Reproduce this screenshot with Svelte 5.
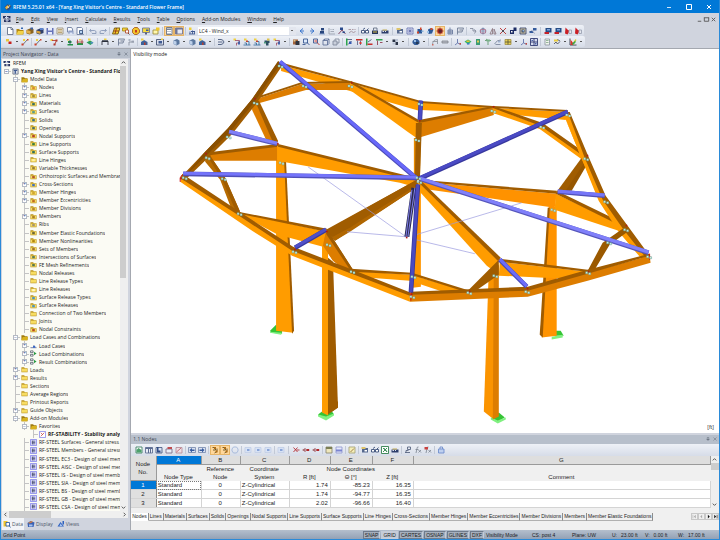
<script lang="ts">
	type Layer = [string, string, string?];

	let activeTab = $state('Nodes');
	let activeView = $state('Data');

	const menus = ['File', 'Edit', 'View', 'Insert', 'Calculate', 'Results', 'Tools', 'Table', 'Options', 'Add-on Modules', 'Window', 'Help'];

	// layers of an icon on a 16 x 16 grid: fill, path, stroke
	const icons: Record<string, Layer[]> = {
		logo: [['#2b3560', 'M0 2h6v5H0zM8 2h7v5H8zM2 9h5v5H2zM9 9h6v5H9z'], ['#c9d4ef', 'M4 4h7v2H4zM5 11h7v1H5z']],
		app: [['#2b4f86', 'M1 8l6-6 8 4-5 9-6-1z'], ['#e6b13a', 'M2 9l5-5 2 5-4 4zM9 3l4 2-2 3z'], ['#fff', 'M6 8l3-2 1 4z']],
		new: [['#fff', 'M3 1h8l3 3v11H3z', '#5e6b84'], ['none', 'M10 1v4h4', '#5e6b84']],
		open: [['#b58a10', 'M1 4h5l2 2h7v9H1z'], ['#f2d24c', 'M4 8h12l-3 7H1z'], ['#3567b0', 'M10 1h4v3h-4z']],
		box: [['#8a6420', 'M1 6l9-4 5 2v8l-8 3-6-2z'], ['#e4b04a', 'M1 6l8 2v6l-8-2z'], ['#3c5fa4', 'M9 1h5v4H9z']],
		boxBlue: [['#30406c', 'M1 6l9-4 5 2v8l-8 3-6-2z'], ['#d7a23c', 'M1 7l8 2v5l-8-2z'], ['#5c83cc', 'M8 2h7v4H8z']],
		save: [['#6673b8', 'M1 2h14v13H1z'], ['#e8ecfa', 'M4 2h8v5H4zM4 10h8v5H4z']],
		list: [['#f3efe2', 'M2 2h12v12H2z', '#9a8f78'], ['none', 'M4 5h8M4 8h8M4 11h8', '#b39a63']],
		print: [['#fff', 'M3 1h8l2 3v6H3z', '#68779a'], ['#8f9fc5', 'M5 7h10v7H5z'], ['#dfe7f7', 'M7 11h6v4H7z']],
		preview: [['#fff', 'M2 1h9l2 2v12H2z', '#68779a'], ['#b9d4f2', 'M7 7h6v6H7z', '#38547f'], ['none', 'M12 12l3 3', '#38547f']],
		undo: [['none', 'M4 4L1 7l4 3M2 7h9q4 0 3 6H6', '#8495b5']],
		redo: [['none', 'M12 4l3 3-4 3M14 7H5q-4 0-3 6h8', '#8495b5']],
		sheet: [['#f5cf2b', 'M5 2h11l-4 12H1z', '#6c5308'], ['none', 'M3 8h11M9 2L6 14', '#8e2f18']],
		find: [['#f3d43a', 'M1 2h10v6H1z', '#a58a1b'], ['#fff', 'M7 6h6v6H7z', '#b04a2c'], ['none', 'M12 12l3 3', '#70351f']],
		gear: [['#f2c52c', 'M5 1h6l4 5v5l-5 4H5l-4-4V5z', '#a6591a'], ['#c33b27', 'M6 6h4v5H6z']],
		monitor: [['#f4da3e', 'M1 2h14v9H1z', '#6d7390'], ['#56617e', 'M6 11h4v4H6z'], ['#3d56a0', 'M8 5h5v3H8z']],
		note: [['#fff7ac', 'M2 6h10v8H2z', '#9b8c3b'], ['#f0c728', 'M8 1h7v6H8z']],
		calc: [['#fff', 'M3 1h11v14H3z', '#5e6b84'], ['#7b8494', 'M4 3h9v3H4zM5 8h2v2H5zM9 8h2v2H9zM5 12h2v2H5zM9 12h2v2H9z']],
		panel: [['#e8eaf2', 'M1 2h14v12H1z', '#6f6f8f'], ['#6f7596', 'M1 2h14v3H1zM1 5h4v9H1z']],
		load: [['#f0cf34', 'M2 1h5v5H2z'], ['none', 'M2 14h12M4 9v5M9 7v7M13 10v4', '#3b5590'], ['#3b5590', 'M6 8h8v2H6z']],
		prev: [['none', 'M10 3L4 8l6 5M5 8h7', '#2367c9']],
		next: [['none', 'M6 3l6 5-6 5M11 8H4', '#2367c9']],
		person: [['#27457d', 'M6 2h6v5H6zM4 8h8v6H4z'], ['#8fa5cb', 'M2 13h12v2H2z']],
		dims: [['none', 'M2 2v12h12M5 5h2M9 5h3M5 9h7', '#9aa0ad']],
		arch: [['#2c4c8d', 'M4 1h6v5H4z'], ['none', 'M1 14l7-8 7 8', '#77314e'], ['#2c4c8d', 'M9 9h5v3H9z']],
		values: [['none', 'M1 5h5M8 5h3M13 5h2M2 12l5-4 4 4 4-4', '#a08c95']],
		glasses: [['#fff', 'M1 7h6v5H1zM9 7h6v5H9z', '#2f4570'], ['none', 'M4 5l4-3M12 6l3-3', '#2f4570']],
		lock: [['#24345c', 'M2 7h12v7H2z'], ['none', 'M5 7V2h7v5', '#5f6a80'], ['#d6bd44', 'M4 9h8v2H4z']],
		cars: [['#2e3f6c', 'M1 7h14v6H1z'], ['#dce1ee', 'M3 8h3v2H3zM8 8h2v2H8z'], ['#c3ad52', 'M3 5h9v2H3z']],
		render: [['#55688e', 'M2 4h12v9H2z'], ['#ddc36a', 'M1 2h8v4H1z'], ['#fff', 'M7 8h5v3H7z']],
		target: [['#e7e9fa', 'M2 2h12v12H2z', '#6771ad'], ['none', 'M8 3v10M3 8h10M5 5l6 6M11 5l-6 6', '#6771ad']],
		node: [['#2b5898', 'M3 4h9v9H3z'], ['#d34526', 'M8 1h3v5H8zM2 9h4v4H2z'], ['#8bb5dd', 'M11 7h4v3h-4z']],
		solid: [['#2b5898', 'M4 5l6-3 5 3-3 8-7 1z'], ['#d84c24', 'M9 2h4v4H9z'], ['#9dc4ea', 'M2 8h4v4H2z']],
		hot: [['#b32a1c', 'M3 3h10v10H3z'], ['#252d56', 'M6 6h5v5H6z'], ['none', 'M1 8h14M8 1v14', '#7e1f18']],
		mesh: [['#c7cedd', 'M4 6h9v8H4z', '#68799d'], ['none', 'M8 1v5M4 10h9M8 6v8', '#68799d']],
		plan: [['#dde0e9', 'M3 2h12l-3 8H3z', '#6c7891'], ['none', 'M3 10v5M7 6h5', '#6c7891']],
		bolt: [['none', 'M2 3h6v5h6M10 5l4 3-3 5', '#818899']],
		move: [['none', 'M8 1v14M1 8h14M5 3h6M5 13h6', '#7787ab'], ['none', 'M3 5h10v7H3z', '#a9718e']],
		mirror: [['none', 'M2 14L7 3v11zM14 14L10 4v10z', '#8b7780']],
		cross: [['none', 'M2 2l12 12M14 2L2 14', '#b8201c'], ['#504b52', 'M6 6h4v4H6z']],
		copy: [['#1d2c65', 'M2 6h8v8H2zM9 1h6v7H9z'], ['#fff', 'M4 8h3v3H4z']],
		camera: [['#cfc6a7', 'M2 2h12v12H2z', '#39466b'], ['#34425f', 'M5 5h6v6H5z'], ['#90b3dc', 'M7 6h3v3H7z']],
		plug: [['#355b9c', 'M8 2h7v5H8zM1 8h7v4H1z'], ['none', 'M5 6l6 7', '#7c8db0']],
		redBox: [['#274d86', 'M3 2h12v9H3z'], ['#c5202a', 'M1 10h9v4H1z'], ['#7ea3d8', 'M6 4h6v3H6z']],
		redFlag: [['#cb1f26', 'M3 1l5 5 4 1-5 8-5-2z'], ['#e5e7ee', 'M10 6h5v7h-5z', '#99a0b1']],
		dot: [['#c7211d', 'M7 7h6v5H7z'], ['#eac83c', 'M2 2h6v5H2z']],
		line: [['none', 'M3 14L13 3', '#5b5e68'], ['#d04028', 'M1 11h4v4H1zM12 2h3v3h-3z'], ['#eed041', 'M4 2h4v4H4z']],
		poly: [['#eed041', 'M1 2h5v4H1z'], ['none', 'M4 5h9L9 14', '#b2372c'], ['#b2372c', 'M11 3h4v4h-4zM7 11h4v4H7z']],
		support: [['#eed041', 'M2 1h5v4H2z'], ['#269547', 'M4 6h7v4H4zM3 12h11v3H3z'], ['none', 'M8 4v9', '#344768']],
		beam: [['#2a9447', 'M2 10h12v4H2z'], ['none', 'M3 3v9M12 3v9M1 8h14', '#a93c35'], ['#eed041', 'M6 2h4v3H6z']],
		slab: [['#2b9d5a', 'M1 9l7-4 7 4-6 5z'], ['#eed041', 'M4 1h5v4H4z'], ['#4f90c4', 'M9 8h5v3H9z']],
		frame: [['none', 'M2 14V6h12v8', '#2a2e3a'], ['#2a2e3a', 'M2 5h12v3H2z'], ['#eed041', 'M6 1h5v3H6z']],
		tree: [['#aab2c2', 'M3 2h4v4H3zM9 5h5v4H9z'], ['none', 'M4 15V8h10', '#858c9a']],
		house: [['#3d6299', 'M2 8l6-4 7 4v6H2z'], ['#eed041', 'M2 1h5v4H2z'], ['#b23e31', 'M8 9h3v5H8z']],
		window: [['#d9deec', 'M1 3h14v11H1z', '#3f4d6e'], ['#3f5a91', 'M5 6h7v5H5z'], ['#eed041', 'M10 1h4v3h-4z']],
		cube: [['#5b789f', 'M3 5l7-3 5 3v7l-6 3-6-3z'], ['#bdd0ea', 'M3 5l6 2v7l-6-2z']],
		curve: [['none', 'M2 3h6q4 0 6 5-2 5-6 5H2M2 8h9', '#405276']],
		tool: [['#eed041', 'M1 1h5v4H1z'], ['none', 'M4 5h9v5H7v5', '#9d4f68'], ['#4561a6', 'M10 7h4v6h-4z']],
		stair: [['#eed041', 'M2 1h5v4H2z'], ['none', 'M1 14h14M3 10h4v4M7 7h5v7', '#356c9d'], ['#c24430', 'M6 5h4v3H6z']],
		stamp: [['#2d4f62', 'M3 5h10v5H3zM6 10h5v5H6z'], ['#dcc24d', 'M8 1h5v4H8z'], ['#4d9a7a', 'M2 8h4v3H2z']],
		brick: [['#a2633b', 'M2 3h10v10H2z'], ['#30353f', 'M7 6h8v8H7z'], ['#d8c48a', 'M3 4h4v3H3z']],
		zoom: [['#dbe8fa', 'M3 2h8v8H3z', '#30508c'], ['none', 'M10 9l5 5M1 13h6', '#30508c']],
		zoomRed: [['#f6dede', 'M3 2h8v8H3z', '#30508c'], ['none', 'M10 9l5 5M5 6h5', '#bd2a24']],
		wire: [['none', 'M2 5h9v9H2zM5 2h9v9M2 5l3-3M11 5l3-3M11 14l3-3M5 2v3', '#5b6d96']],
		wireGrey: [['#c9cfdb', 'M2 6h8v8H2z', '#7d8799'], ['none', 'M6 6V2h8v8h-4', '#7d8799']],
		axisX: [['none', 'M3 2v12M3 3h11M6 13l7-7', '#4b5478'], ['#2da34c', 'M2 1h3v14H2z'], ['#3458b0', 'M8 7h5v5H8z']],
		axisY: [['#c72e2a', 'M2 2h13v3H2z'], ['none', 'M5 5v9M11 5v9', '#5b6285'], ['#d6332e', 'M9 8h4v4H9z']],
		axisZ: [['#2da34c', 'M2 1h3v14H2z'], ['#c72e2a', 'M5 11h10v3H5z'], ['none', 'M6 8l7-5', '#43507a']],
		axisV: [['#2da34c', 'M2 2h13v3H2z'], ['none', 'M5 5v9M10 9h5', '#8b3448']],
		shade: [['#2a3346', 'M3 3h6v5H3zM9 8h5v6H9z'], ['#bbc5d7', 'M9 2h5v5H9zM3 9h5v4H3z']],
		globe: [['#315a97', 'M5 2h6l4 4v5l-4 3H5l-4-4V6z'], ['#9abfe6', 'M4 4h4v4H4z'], ['#263a55', 'M8 8h5v4H8z']],
		arcs: [['none', 'M3 14Q3 3 13 3v9M3 7h10', '#8b9199'], ['#cb6d62', 'M2 12h3v3H2z']],
		pill: [['#b6bac4', 'M2 6h12v4H2z', '#83878f']],
		axes: [['none', 'M7 2v8l7 3M7 10l-5 4', '#5c6fa8'], ['#c74a3f', 'M11 10h3v3h-3z']],
		iso: [['#36b76b', 'M1 7l7-4 7 4-7 6z'], ['#e9c13a', 'M5 5h6v3H5z'], ['#3a7ac7', 'M6 10h5v3H6z']],
		solidGreen: [['#3a9b74', 'M4 2h8v12H4z'], ['#e0cd54', 'M6 5h4v4H6z']],
		palm: [['none', 'M2 5h12M8 5v9M4 2l4 3', '#5b9567'], ['#7ab08a', 'M5 3h7v4H5z']],
		wind: [['none', 'M1 12q5-9 13-8M3 13h10', '#77839b'], ['#9fb2d0', 'M8 6h5v3H8z']],
		grid: [['#e6cf55', 'M2 3h12v10H2z', '#a3924a'], ['none', 'M2 8h12M8 3v10', '#5c5838']],
		quad: [['#d5dcf0', 'M1 1h14v14H1z', '#28336c'], ['none', 'M8 1v14M1 8h14', '#28336c'], ['#4d64a8', 'M3 4h3v2H3zM10 10h3v3h-3z']],
		doc: [['#f1f3ee', 'M4 2h9v12H4z', '#8e97a0'], ['#95b899', 'M6 4h5v2H6zM6 8h5v2H6z']],
		spring: [['#e9cc3f', 'M2 3h8v4H2z'], ['none', 'M2 12l4-4 3 4 5-5M9 3l5 3', '#494d58']],
		chart: [['#fff', 'M2 1v13h13', '#262c3c'], ['#d6332e', 'M3 3l5 6v5H3z'], ['#e8cf32', 'M8 9l5-7 2 2-6 10z'], ['#38a14d', 'M6 11l7-6v4l-5 5z']],
		tblGreen: [['#fff', 'M2 2h12v12H2z', '#387b5d'], ['#4ba06c', 'M3 8l4-4 6 4v5H3z']],
		tbl: [['#e9edf6', 'M1 3h14v11H1z', '#5b6b90'], ['#5b6b90', 'M1 3h14v3H1zM6 6h2v8H6zM10 6h2v8h-2z']],
		tblIn: [['#dce3f2', 'M2 3h12v11H2z', '#46587f'], ['#2f4a85', 'M4 2h3v7h4v4H4z']],
		tblRed: [['#e9edf6', 'M2 6h12v8H2z', '#7a6c88'], ['#bf4b4e', 'M5 2h9v4H5z']],
		tblPink: [['#eedfe4', 'M2 3h12v11H2z', '#b68d98'], ['none', 'M3 12l9-8', '#ba5b67']],
		tblBack: [['#dce3f2', 'M1 3h14v10H1z', '#7b8cb0'], ['#355a9e', 'M3 8l5-4v3h5v3H8v3z']],
		tblNext: [['#dce3f2', 'M1 3h14v10H1z', '#7b8cb0'], ['#355a9e', 'M13 8L8 4v3H3v3h5v3z']],
		sync: [['none', 'M3 3h6v5H4M12 5v6l-5 3', '#5a4a1e'], ['#b06d14', 'M6 2h4v4H6zM9 9h4v4H9z']],
		ring: [['none', 'M5 2h6l3 4v4l-3 4H5l-3-4V6z', '#9fb4d8']],
		faded: [['#d7e2f5', 'M2 3h12v10H2z', '#c3cfe6'], ['#8aa5d8', 'M6 6h5v4H6z']],
		del: [['none', 'M3 3l8 9M11 3l-8 9M9 8h6', '#b3262a']],
		ins: [['none', 'M1 8h14M7 4l-4 4 4 4', '#913c42'], ['#b3262a', 'M9 6h5v4H9z']],
		yellow: [['#efe7bb', 'M2 2h12v12H2z', '#8a8870'], ['#7c7f55', 'M2 2h12v4H2z']],
		blueTbl: [['#e6e9fb', 'M2 2h12v12H2z', '#9299cf'], ['#7983cf', 'M2 7h12v4H2z']],
		pen: [['#f5efb8', 'M2 2h12v12H2z', '#a7a279'], ['none', 'M5 12l7-7', '#8f6c3a']],
		excel: [['#fff', 'M1 1h14v14H1z', '#267a43'], ['none', 'M4 4l8 8M12 4l-8 8', '#267a43'], ['none', 'M6 4l6 7', '#3c9c5b']],
		fx: [['none', 'M9 2q-3-1-3 3L4 14M3 7h6M9 8l5 5M14 8l-5 5', '#7e8694']],
		fxRed: [['none', 'M9 2q-3-1-3 3L4 14M9 8l5 5M14 8l-5 5', '#7e8694'], ['#c8403f', 'M1 2h7v5H1z']],
		nodeLink: [['none', 'M7 2h6v5H7zM2 13h10M4 13V9h5', '#525e7c']],
		disk: [['#bfd0ef', 'M3 6h11v8H3z', '#6a8acb'], ['none', 'M6 6V2h5v4', '#6a8acb']],
		folder: [['#b8901c', 'M1 3h6l2 2h6v9H1z'], ['#f7dc62', 'M2 6h12v7H2z']],
		folderOpen: [['#a07c10', 'M1 3h6l2 2h6v9H1z'], ['#d9b31e', 'M4 7h12l-2 7H1z']],
		model: [['#d9dee8', 'M2 2h12v12H2z', '#5c6579'], ['#3f5a91', 'M4 4h8v3H4zM6 7h3v6H6z']],
		moduleIcon: [['#dcdcff', 'M1 1h14v14H1z', '#7a7ae8'], ['none', 'M4 5h8M4 8h8M4 11h8M6 4v8', '#4a4f70']],
		module: [['#fff', 'M1 1h14v14H1z', '#7a7ae8'], ['none', 'M4 12l8-8M4 4l5 5', '#c44242']],
		loadCase: [['none', 'M1 13h14M9 7v6', '#4d5c96'], ['#3768c8', 'M7 9h5v4H7z']],
		combo: [['#fff', 'M1 2h6v4H1zM1 10h6v4H1z', '#4b5263'], ['#2a9a42', 'M9 4l6 4-6 4z']],
		data: [['#f1c62f', 'M1 2h8v11H1z'], ['#fff', 'M6 5h7v7H6z', '#28589f'], ['none', 'M12 11l3 4', '#28589f']],
		display: [['#3a62b4', 'M1 6l6-4 8 3-2 9H2z'], ['#d87c3b', 'M2 6l7-4 3 2-7 3z'], ['#a9c3ef', 'M4 9h7v4H4z']],
		views: [['#2f62c0', 'M1 13l6-9 7 9z'], ['#a8c4f2', 'M7 7l4 5H5z'], ['#2f62c0', 'M11 2h3v7h-3z']]
	};

	// | thin separator, : group gap, v drop arrow, ! pressed button
	const fileTools = 'new open box boxBlue save list print preview | undo redo | sheet find gear monitor note | !calc !panel | load'.split(' ');
	const viewTools = 'prev next person dims arch values | glasses lock cars : render target node solid !hot mesh plan | bolt move mirror cross copy camera plug : redBox redBox redFlag redFlag'.split(' ');
	const modelTools =
		'dot v line | line v poly v support beam slab : frame v plan tree | house v window v cube v cube house v | curve v tool stair stair stamp tool v | brick zoom zoomRed wire wireGrey | axisX axisY axisZ axisV v shade v : globe v | arcs pill | axes iso solidGreen palm wind grid v axes quad | doc spring v chart v'.split(' ');
	const tableTools =
		'tblGreen tbl tblIn tblRed tblPink | tblBack tblNext | !sync !sync ring | faded faded faded | faded : del ins ins | yellow blueTbl | pen | render glasses excel cars | nodeLink fx fxRed | disk'.split(' ');

	// depth, sign, icon, label, mark colour
	const tree: [number, string, string, string, string?][] = [
		[0, '', 'logo', 'RFEM'],
		[1, '-', 'model', "Yang Xing Visitor's Centre - Standard Flower Frame"],
		[2, '-', 'folderOpen', 'Model Data'],
		[3, '+', 'folder', 'Nodes', '#d8892a'],
		[3, '+', 'folder', 'Lines', '#a38a3d'],
		[3, '+', 'folder', 'Materials', '#3d6f5c'],
		[3, '+', 'folder', 'Surfaces', '#5b9a8b'],
		[3, '', 'folder', 'Solids', '#3b6d86'],
		[3, '', 'folder', 'Openings', '#4d6c63'],
		[3, '+', 'folder', 'Nodal Supports', '#b3402a'],
		[3, '', 'folder', 'Line Supports', '#3f7d3b'],
		[3, '', 'folder', 'Surface Supports', '#2f6e5a'],
		[3, '', 'folder', 'Line Hinges', '#fff2a8'],
		[3, '', 'folder', 'Variable Thicknesses', '#967b35'],
		[3, '', 'folder', 'Orthotropic Surfaces and Membranes', '#b0562e'],
		[3, '+', 'folder', 'Cross-Sections', '#3f6fc0'],
		[3, '+', 'folder', 'Member Hinges', '#cfa530'],
		[3, '+', 'folder', 'Member Eccentricities', '#c06b22'],
		[3, '', 'folder', 'Member Divisions', '#b5832b'],
		[3, '+', 'folder', 'Members', '#a97e26'],
		[3, '', 'folder', 'Ribs', '#a5946a'],
		[3, '', 'folder', 'Member Elastic Foundations', '#6d6535'],
		[3, '', 'folder', 'Member Nonlinearities', '#b28411'],
		[3, '', 'folder', 'Sets of Members', '#a0702d'],
		[3, '', 'folder', 'Intersections of Surfaces', '#597b5a'],
		[3, '', 'folder', 'FE Mesh Refinements', '#55754c'],
		[3, '', 'folder', 'Nodal Releases'],
		[3, '', 'folder', 'Line Release Types'],
		[3, '', 'folder', 'Line Releases', '#fff8c6'],
		[3, '', 'folder', 'Surface Release Types', '#4c93bd'],
		[3, '', 'folder', 'Surface Releases', '#4c93bd'],
		[3, '', 'folder', 'Connection of Two Members'],
		[3, '', 'folder', 'Joints'],
		[3, '', 'folder', 'Nodal Constraints', '#b84a20'],
		[2, '-', 'folderOpen', 'Load Cases and Combinations'],
		[3, '+', 'loadCase', 'Load Cases'],
		[3, '+', 'combo', 'Load Combinations'],
		[3, '+', 'combo', 'Result Combinations'],
		[2, '+', 'folder', 'Loads'],
		[2, '+', 'folder', 'Results'],
		[2, '', 'folder', 'Sections'],
		[2, '', 'folder', 'Average Regions'],
		[2, '', 'folder', 'Printout Reports'],
		[2, '+', 'folder', 'Guide Objects'],
		[2, '-', 'folderOpen', 'Add-on Modules'],
		[3, '-', 'folderOpen', 'Favorites'],
		[4, '', 'module', 'RF-STABILITY - Stability analysis'],
		[3, '', 'moduleIcon', 'RF-STEEL Surfaces - General stress analysis'],
		[3, '', 'moduleIcon', 'RF-STEEL Members - General stress analysis'],
		[3, '', 'moduleIcon', 'RF-STEEL EC3 - Design of steel members'],
		[3, '', 'moduleIcon', 'RF-STEEL AISC - Design of steel members'],
		[3, '', 'moduleIcon', 'RF-STEEL IS - Design of steel members'],
		[3, '', 'moduleIcon', 'RF-STEEL SIA - Design of steel members'],
		[3, '', 'moduleIcon', 'RF-STEEL BS - Design of steel members'],
		[3, '', 'moduleIcon', 'RF-STEEL GB - Design of steel members'],
		[3, '', 'moduleIcon', 'RF-STEEL CSA - Design of steel members']
	];

	const rows = [
		[1, '1.74', '-85.23', '16.35'],
		[2, '1.74', '-94.77', '16.35'],
		[3, '2.02', '-96.66', '16.40']
	];

	const tabs = [
		'Nodes', 'Lines', 'Materials', 'Surfaces', 'Solids', 'Openings', 'Nodal Supports', 'Line Supports', 'Surface Supports', 'Line Hinges',
		'Cross-Sections', 'Member Hinges', 'Member Eccentricities', 'Member Divisions', 'Members', 'Member Elastic Foundations'
	];

	const snaps = ['SNAP', 'GRID', 'CARTES', 'OSNAP', 'GLINES', 'DXF'];

	const O = '#ff9c00';
	const M = '#dd7d00';
	const B = '#a05c00';
	const G = '#35c435';
	const L = '#80f080';

	// timber faces, back to front
	const faces: [string, string][] = [
		[G, '270,331 276,325 282,331 282,334 271,333'],
		[L, '270,332 282,333 281,335 270,333'],
		[O, '276,160 285,160 293,333 276,331'],
		[B, '284,160 286,162 294,331 292,334'],
		['#ff9600', '417,186 421,186 421,287 413,288'],
		[G, '552,336 556,331 561,331 564,336'],
		[L, '552,337 563,335 563,338 552,340'],
		['#ff9300', '549,207 557,207 557,336 542,338'],
		[B, '548,208 550,208 543,338 540,335'],
		[O, '281,65 350,83 420,102 420,111 350,91 281,71'],
		[B, '279,62 350,81 421,101 421,103 350,83 281,65'],
		[O, '421,102 493,108 568,112 566,120 493,113 421,110'],
		[B, '420,101 493,106 568,110 568,112 493,108 421,103'],
		[M, '253,100 302,84 350,83 350,90 306,90 256,104'],
		[B, '253,98 302,82 350,81 350,83 302,84 253,100'],
		[O, '350,83 419,122 418,139 408,132 350,90'],
		[B, '351,81 419,120 419,123 350,83'],
		[M, '419,122 493,107 494,115 418,138'],
		[B, '419,120 493,106 493,108 419,123'],
		[O, '493,108 543,126 586,157 584,161 540,129 493,113'],
		[B, '493,106 543,123 588,155 586,158 541,126 493,108'],
		[M, '252,103 257,101 278,142 268,144 252,110'],
		[B, '255,101 259,101 278,141 274,145'],
		[M, '205,155 278,146 278,161 207,161'],
		[B, '205,153 278,144 278,147 205,156'],
		[O, '277,146 412,178 418,183 414,187 400,183 277,161'],
		[B, '278,144 416,178 416,181 278,147'],
		['#e98c00', '414,138 421,138 420,180 414,180'],
		[B, '416,123 422,123 420,180 415,180'],
		['#ff9200', '420,182 557,194 555,208 480,197 430,190'],
		[B, '419,180 557,191 557,194 420,182'],
		[O, '556,194 626,227 622,232 555,210'],
		[B, '557,191 627,225 625,228 556,194'],
		[B, '582,158 588,161 570,191 557,192'],
		['#965600', '586,161 589,162 572,191 566,191'],
		[O, '565,117 583,158 602,200 623,230 645,261 641,258 619,232 599,201'],
		[O, '565,117 569,114 587,157 605,199 627,229 650,258 645,261 621,231 601,203 583,161'],
		[B, '568,112 570,112 588,155 606,196 628,226 650,256 647,259 624,230 603,200 585,158'],
		['#9a5900', '623,229 628,232 610,245 595,270 588,271 603,243'],
		['#b76b00', '205,156 210,156 225,178 240,212 232,211 220,180 205,162'],
		[B, '207,156 210,156 225,178 240,212 236,212 222,180'],
		[O, '239,213 327,232 323,247 278,235 242,216'],
		[B, '238,212 327,229 326,232 239,214'],
		[O, '418,182 421,184 500,261 491,269 487,266 419,191'],
		[B, '420,180 501,258 498,261 419,183'],
		[B, '326,231 390,195 417,180 418,187 392,204 350,231 335,241'],
		['#b06600', '332,237 350,228 418,183 418,187 350,232 335,241'],
		[B, '326,230 417,180 418,185 350,227 333,237'],
		[M, '326,231 352,271 345,270 333,261 323,246'],
		[B, '328,231 353,270 350,270 326,234'],
		[O, '351,271 411,275 469,292 443,292 410,281 370,278'],
		[B, '351,269 412,273 470,291 462,291 411,275 351,272'],
		[O, '322,246 328,247 328,416 322,413'],
		[B, '328,258 333,262 338,408 328,415'],
		[M, '326,232 351,270 345,270 333,261 323,246'],
		[B, '328,231 353,270 350,270 326,234'],
		[G, '318,415 322,412 332,412 334,415 326,419'],
		[L, '318,415 326,417 334,414 334,416 326,421 318,417'],
		[O, '322,408 328,408 328,416 322,413'],
		[B, '328,402 338,402 338,408 328,415'],
		['#fb9400', '489,270 495,270 494,420 484,412'],
		[G, '492,419 499,413 505,418 498,422'],
		[L, '491,418 498,421 506,418 506,420 498,424 491,420'],
		[M, '494,270 499,265 499,417 493,420'],
		[O, '500,262 588,272 577,279 545,278 499,276'],
		[B, '499,259 588,270 587,272 499,262'],
		[B, '499,260 499,275 476,291 467,292'],
		[O, '182,177 238,213 293,249 350,271 410,294 410,302 292,256 252,231 180,182'],
		[B, '182,174 238,211 293,247 350,269 411,293 410,296 349,273 292,251 236,214 181,179'],
		[M, '410,294 528,290 588,273 650,256 651,263 588,281 528,297 410,302'],
		[B, '411,292 528,287 588,270 650,254 650,256 588,274 528,291 411,295'],
		[B, '278,62 282,66 256,104 232,134 208,158 184,181 180,178 204,153 228,128 252,99'],
		['#8a4f00', '278,61 281,63 255,101 230,132 206,156 183,178 204,153 228,128 252,99']
	];

	const guides = ['406,237 308,167', '406,237 347,232', '416,235 522,203', '416,240 475,254'];

	// steel bars: dark edge, top face, ends
	const bars: [string, string, number, number, number, number][] = [
		['#4a4ab8', '#6868fa', 280, 62, 417, 179],
		['#5050b8', '#7474fa', 183, 174, 417, 178],
		['#38389e', '#4a4ac4', 419, 179, 568, 112],
		['#5555bb', '#8080fa', 420, 179, 649, 253],
		['#5858bb', '#8080f8', 229, 132, 277, 144],
		['#3838a0', '#5050c8', 295, 248, 326, 230],
		['#34349a', '#4a4ac0', 418, 185, 411, 293],
		['#4848b8', '#6c6cf8', 500, 260, 527, 287],
		['#5050b8', '#7676f8', 558, 192, 605, 196],
		['#38389e', '#4a4ac4', 421, 101, 420, 120]
	];

	const joints = [
		[279, 66], [254, 103], [227, 137], [206, 158], [183, 178], [222, 179], [238, 214], [293, 252], [303, 86], [349, 86],
		[419, 104], [492, 111], [541, 127], [567, 115], [585, 159], [605, 202], [625, 230], [608, 243], [648, 257], [587, 273],
		[526, 292], [468, 293], [411, 297], [412, 277], [351, 272], [327, 245], [494, 276], [417, 178], [418, 182], [552, 210], [416, 140], [280, 163]
	];
	const ends = [[254, 98], [205, 153], [180, 178], [277, 143], [351, 82], [493, 106], [587, 155], [626, 225], [650, 257], [406, 237], [411, 294], [527, 288], [419, 120], [294, 249], [469, 291], [588, 271], [326, 231]];
</script>

{#snippet icon(name: string, mark?: string)}
	<svg class="icon" viewBox="0 0 16 16" aria-hidden="true">
		{#each icons[name] as [fill, d, stroke]}
			<path {d} {fill} stroke={stroke ?? 'none'} stroke-width="1.700" />
		{/each}
		{#if mark}
			<path d="M5 7h6v5H5z" fill={mark} />
		{/if}
	</svg>
{/snippet}

{#snippet tools(items: string[])}
	{#each items as item}
		{#if item === '|'}
			<span class="sep"></span>
		{:else if item === ':'}
			<span class="sep wide"></span>
		{:else if item === 'v'}
			<button class="drop" aria-label="More"></button>
		{:else}
			<button class="tool" class:pressed={item[0] === '!'} aria-label={item.replace('!', '')}>
				{@render icon(item.replace('!', ''))}
			</button>
		{/if}
	{/each}
{/snippet}

{#snippet panelButtons()}
	<span class="panel-buttons">
		<button aria-label="Pin">
			<svg viewBox="0 0 8 8"><path d="M2.5 1h3v4h-3zM1 5h6M4 5v3" fill="none" stroke="#5d6675" /></svg>
		</button>
		<button aria-label="Close panel">
			<svg viewBox="0 0 8 8"><path d="M1 1l6 6M7 1L1 7" fill="none" stroke="#5d6675" /></svg>
		</button>
	</span>
{/snippet}

<div class="window">
	<header class="titlebar">
		{@render icon('app')}
		<h1>RFEM 5.25.01 x64 - [Yang Xing Visitor's Centre - Standard Flower Frame]</h1>
		<button aria-label="Minimize"><svg viewBox="0 0 8 8"><path d="M2 4.500h4" stroke="#cfe6fa" /></svg></button>
		<button aria-label="Maximize"><svg viewBox="0 0 8 8"><path d="M1.500 1.500h5v5h-5z" fill="none" stroke="#fff" /></svg></button>
		<button aria-label="Close"><svg viewBox="0 0 8 8"><path d="M2 2l4 4M6 2L2 6" stroke="#fff" /></svg></button>
	</header>

	<nav class="menubar">
		{@render icon('logo')}
		{#each menus as menu}
			<a href="#menu"><u>{menu[0]}</u>{menu.slice(1)}</a>
		{/each}
		<span class="mdi">
			<button aria-label="Minimize view"><svg viewBox="0 0 8 8"><path d="M2 6h4" stroke="#555" /></svg></button>
			<button aria-label="Restore view"><svg viewBox="0 0 8 8"><path d="M1.500 2v4h5V2M1 2h6" fill="none" stroke="#555" /></svg></button>
			<button aria-label="Close view"><svg viewBox="0 0 8 8"><path d="M2 2l4 4M6 2L2 6" stroke="#555" /></svg></button>
		</span>
	</nav>

	<div class="toolbar first">
		{@render tools(fileTools)}
		<select aria-label="Load case">
			<option>LC4 - Wind_x</option>
		</select>
		{@render tools(viewTools)}
	</div>
	<div class="toolbar">
		{@render tools(modelTools)}
	</div>

	<div class="main">
		<aside class="sidebar">
			<div class="panel-head">
				<h2>Project Navigator - Data</h2>
				{@render panelButtons()}
			</div>
			<div class="navigator">
				<ul class="tree">
					{#each tree as [depth, sign, name, label, mark], i}
						<li class:bold={i === 1 || depth === 4} class:root={depth === 0}>
							{#each Array(depth) as _, level}
								{#if level < depth - 1}
									<span class="guide" class:rail={level > 0 && i < 45}></span>
								{:else}
									<span class="guide branch" class:rail={level > 0}>
										{#if sign}<button class="expander" aria-label={label}>{sign === '+' ? '+' : '−'}</button>{/if}
									</span>
								{/if}
							{/each}
							{@render icon(name, mark)}
							<span class="label">{label}</span>
						</li>
					{/each}
				</ul>
				<div class="scroll-y">
					<svg viewBox="0 0 8 8"><path d="M2 5l2-2 2 2" fill="none" stroke="#444" /></svg>
					<span class="thumb"></span>
					<svg viewBox="0 0 8 8"><path d="M2 3l2 2 2-2" fill="none" stroke="#444" /></svg>
				</div>
				<div class="scroll-x">
					<svg viewBox="0 0 8 8"><path d="M5 2L3 4l2 2" fill="none" stroke="#444" /></svg>
					<span class="thumb"></span>
					<svg viewBox="0 0 8 8"><path d="M3 2l2 2-2 2" fill="none" stroke="#444" /></svg>
				</div>
			</div>
			<div class="side-tabs">
				{#each ['Data', 'Display', 'Views'] as view}
					<button class:active={activeView === view} onclick={() => (activeView = view)}>
						{@render icon(view.toLowerCase())}{view}
					</button>
				{/each}
			</div>
		</aside>

		<div class="work">
			<section class="viewport">
				<span class="mode">Visibility mode</span>
				<svg class="model" viewBox="131 49 588 384" role="img" aria-label="Flower frame">
					{#each faces as [fill, points]}
						<polygon {points} {fill} />
					{/each}
					{#each guides as points}
						<polyline {points} fill="none" stroke="#9a9ae0" stroke-width=".7" />
					{/each}
					<path d="M414 188L407 237" stroke="#2a2a50" stroke-width="5" />
					<path d="M415 188L408 237M412 190L406 237" stroke="#8080e8" stroke-width="1" />
					{#each bars as [edge, face, x1, y1, x2, y2]}
						<line {x1} {x2} {y1} {y2} stroke={edge} stroke-width="4.600" />
						<line {x1} {x2} y1={y1 - 0.6} y2={y2 - 0.6} stroke={face} stroke-width="3.200" />
					{/each}
					{#each ends as [x, y]}
						<rect {x} {y} width="1.600" height="1.600" fill="#b01818" />
					{/each}
					<path d="M180 182v-4l2-3M650 254v6M411 293v8" fill="none" stroke="#d01010" stroke-width="1" />
					{#each joints as [x, y]}
						<path d="M{x - 1} {y - 1}h2v2h-2zM{x + 2} {y}h2v2h-2z" fill="#d8fff4" stroke="#5f9a90" stroke-width=".5" />
					{/each}
				</svg>
				<span class="unit">[ft]</span>
			</section>

			<section class="data-panel">
				<div class="panel-head">
					<h2>1.1 Nodes</h2>
					{@render panelButtons()}
				</div>
				<div class="toolbar table-tools">
					{@render tools(tableTools)}
				</div>
				<div class="grid-wrap">
					<table>
						<colgroup>
							<col class="c-no" /><col class="c-a" /><col class="c-b" /><col class="c-c" />
							<col class="c-d" /><col class="c-e" /><col class="c-d" /><col />
						</colgroup>
						<thead>
							<tr class="letters">
								<th rowspan="3" class="corner">Node<br />No.</th>
								{#each 'ABCDEFG' as letter}
									<th class:selected={letter === 'A'}>{letter}</th>
								{/each}
							</tr>
							<tr>
								<th></th>
								<th>Reference</th>
								<th>Coordinate</th>
								<th colspan="3">Node Coordinates</th>
								<th></th>
							</tr>
							<tr>
								<th>Node Type</th>
								<th>Node</th>
								<th>System</th>
								<th>R [ft]</th>
								<th>Θ [°]</th>
								<th>Z [ft]</th>
								<th>Comment</th>
							</tr>
						</thead>
						<tbody>
							{#each rows as [no, r, theta, z]}
								<tr>
									<th class:selected={no === 1}>{no}</th>
									<td class:focused={no === 1}>Standard</td>
									<td class="center">0</td>
									<td>Z-Cylindrical</td>
									<td class="num">{r}</td>
									<td class="num">{theta}</td>
									<td class="num">{z}</td>
									<td></td>
								</tr>
							{/each}
						</tbody>
					</table>
					<div class="scroll-y">
						<svg viewBox="0 0 8 8"><path d="M2 5l2-2 2 2" fill="none" stroke="#444" /></svg>
						<span class="thumb"></span>
						<svg viewBox="0 0 8 8"><path d="M2 3l2 2 2-2" fill="none" stroke="#444" /></svg>
					</div>
				</div>
				<div class="sheet-tabs">
					{#each tabs as tab}
						<button class:active={activeTab === tab} onclick={() => (activeTab = tab)}>{tab}</button>
					{/each}
					<span class="pager">
						<button aria-label="First"><svg viewBox="0 0 8 8"><path d="M6 1v6L3 4zM1 1h1v6H1z" fill="#aaa" /></svg></button>
						<button aria-label="Previous"><svg viewBox="0 0 8 8"><path d="M5 1v6L2 4z" fill="#aaa" /></svg></button>
						<button aria-label="Next"><svg viewBox="0 0 8 8"><path d="M3 1v6l3-3z" fill="#111" /></svg></button>
						<button aria-label="Last"><svg viewBox="0 0 8 8"><path d="M2 1v6l3-3zM6 1h1v6H6z" fill="#111" /></svg></button>
					</span>
				</div>
			</section>
		</div>
	</div>

	<footer class="statusbar">
		<span class="hint">Grid Point</span>
		{#each snaps as snap}
			<button class:on={snap === 'GRID'}>{snap}</button>
		{/each}
		<span class="cell wide">Visibility Mode</span>
		<span class="cell">CS: post 4</span>
		<span class="cell">Plane: UW</span>
		<span class="cell short"><span>U:</span><span>23.00 ft</span></span>
		<span class="cell short"><span>V:</span><span>0.00 ft</span></span>
		<span class="cell"><span>W:</span><span>17.00 ft</span></span>
	</footer>
</div>

<style>
	:global(body) {
		margin: 0;
	}

	.window {
		height: 100vh;
		display: flex;
		flex-direction: column;
		box-sizing: border-box;
		border: 1px solid #2a8ad8;
		border-top: 0;
		background: #d0d4de;
		color: #1c1c1c;
		font-family: 'Open Sans', 'Noto Sans', sans-serif;
		font-size: 5px;
		line-height: 8px;
		overflow: hidden;
	}

	button,
	select {
		margin: 0;
		padding: 0;
		border: 0;
		background: none;
		color: inherit;
		font: inherit;
		line-height: inherit;
	}

	h1,
	h2 {
		margin: 0;
		font-size: 5px;
		font-weight: 400;
	}

	svg {
		display: block;
	}

	.icon {
		width: 8px;
		height: 8px;
		flex: none;
	}

	/* Title and menu */
	.titlebar {
		display: flex;
		align-items: center;
		height: 13px;
		padding-left: 3px;
		background: #0078d7;
		color: #fff;
	}

	.titlebar h1 {
		flex: 1;
		padding-left: 1px;
		font-weight: 600;
	}

	.titlebar button {
		width: 20px;
	}

	.titlebar button svg {
		width: 8px;
		margin: auto;
	}

	.menubar {
		display: flex;
		align-items: center;
		gap: 7px;
		height: 12px;
		padding: 0 2px;
	}

	.menubar .icon {
		margin-right: -2px;
	}

	.menubar a {
		color: #222;
		text-decoration: none;
		white-space: nowrap;
	}

	.mdi {
		display: flex;
		margin-left: auto;
	}

	.mdi button {
		width: 7px;
	}

	/* Toolbars */
	.toolbar {
		display: flex;
		align-items: center;
		align-self: flex-start;
		height: 11px;
		padding: 0 1px 0 3px;
		border-radius: 0 2px 2px 0;
		background: linear-gradient(#eef1f7, #d6dce8);
	}

	.toolbar.first {
		padding-left: 4px;
	}

	.tool {
		width: 10px;
		height: 10px;
		display: grid;
		place-items: center;
		box-sizing: border-box;
		flex: none;
	}

	.tool.pressed {
		background: #ffd79a;
		outline: 1px solid #e6b568;
		outline-offset: -1px;
	}

	.drop {
		width: 6px;
		height: 8px;
		flex: none;
		background: linear-gradient(#555, #555) center / 2px 1px no-repeat;
	}

	.sep {
		width: 1px;
		height: 8px;
		margin: 0 1px;
		flex: none;
		background: #c2c9d6;
	}

	.sep.wide {
		margin: 0 2px;
	}

	select {
		width: 98px;
		height: 8px;
		margin: 0 1px;
		padding: 0 1px;
		appearance: none;
		background:
			linear-gradient(#666, #666) right 3px center / 2px 1px no-repeat,
			linear-gradient(#e3e6ee, #e3e6ee) right / 7px 100% no-repeat,
			#fff;
	}

	/* Panels */
	.main {
		flex: 1;
		min-height: 0;
		display: flex;
		margin-top: 1px;
		border-top: 1px solid #a4a8b0;
	}

	.sidebar {
		flex: 0 0 18%;
		min-width: 0;
		display: flex;
		flex-direction: column;
	}

	.panel-head {
		display: flex;
		align-items: center;
		justify-content: space-between;
		height: 9px;
		padding: 0 2px;
		background: #b7bfcb;
		color: #3c4350;
	}

	.panel-buttons {
		display: flex;
		gap: 3px;
	}

	.panel-buttons svg {
		width: 4px;
		height: 4px;
	}

	.navigator {
		flex: 1;
		min-height: 0;
		display: grid;
		grid-template: minmax(0, 1fr) 7px / minmax(0, 1fr) 8px;
		margin: 1px 2px 0 1px;
		background: #fbfbf4;
	}

	.tree {
		display: grid;
		grid-auto-rows: minmax(0, 1fr);
		grid-template-columns: minmax(0, 1fr);
		margin: 0;
		padding: 0;
		list-style: none;
	}

	.tree li {
		display: flex;
		align-items: center;
		min-width: 0;
		white-space: nowrap;
	}

	.tree .icon {
		width: 7px;
		height: 7px;
		margin: 0 1px;
	}

	.tree .root .icon {
		width: 8px;
	}

	.label {
		min-width: 0;
		padding-left: 1px;
		overflow: hidden;
	}

	.bold {
		font-weight: 700;
	}

	.guide {
		position: relative;
		align-self: stretch;
		width: 9px;
		flex: none;
		display: grid;
		place-items: center;
	}

	.rail {
		background: linear-gradient(#c4c4c4, #c4c4c4) 4px 0 / 1px 100% no-repeat;
	}

	.branch::after {
		content: '';
		position: absolute;
		left: 5px;
		right: 0;
		top: 50%;
		height: 1px;
		background: #c4c4c4;
	}

	.expander {
		z-index: 1;
		width: 5px;
		height: 5px;
		box-sizing: border-box;
		border: 1px solid #b4bac4;
		background: #fff;
		color: #33518f;
		line-height: 3px;
		overflow: hidden;
	}

	.scroll-y,
	.scroll-x {
		display: flex;
		background: #efefef;
	}

	.scroll-y {
		flex-direction: column;
	}

	.scroll-y svg,
	.scroll-x svg {
		width: 7px;
		height: 7px;
		flex: none;
	}

	.scroll-y svg:last-child {
		margin-top: auto;
	}

	.scroll-x svg:last-child {
		margin-left: auto;
	}

	.thumb {
		background: #cdcdcd;
	}

	.navigator .scroll-y .thumb {
		height: 47%;
		width: 6px;
	}

	.navigator .scroll-x {
		grid-column: 1 / -1;
	}

	.navigator .scroll-x .thumb {
		width: 42px;
	}

	.side-tabs {
		display: flex;
		gap: 2px;
		height: 12px;
		padding: 0 1px;
		color: #4a5568;
	}

	.side-tabs button {
		display: flex;
		align-items: center;
		gap: 1px;
		padding: 0 1px;
	}

	.side-tabs .active {
		background: #f2f4f8;
	}

	.work {
		flex: 1;
		min-width: 0;
		display: flex;
		flex-direction: column;
		border-left: 1px solid #a4a8b0;
	}

	.viewport {
		position: relative;
		flex: 1;
		min-height: 0;
		background: #fff;
	}

	.model {
		width: 100%;
		height: 100%;
	}

	.mode,
	.unit {
		position: absolute;
		color: #111;
	}

	.mode {
		left: 2px;
		top: 1px;
	}

	.unit {
		right: 5px;
		bottom: 2px;
	}

	/* Table */
	.data-panel {
		margin-top: 2px;
		background: #f0f0f0;
	}

	.data-panel .table-tools {
		height: 12px;
		border-radius: 0;
	}

	.grid-wrap {
		display: grid;
		grid-template-columns: minmax(0, 1fr) 8px;
		font-family: 'Liberation Sans', Arial, sans-serif;
		font-size: 6px;
	}

	.grid-wrap .scroll-y .thumb {
		height: 7px;
	}

	table {
		width: 100%;
		table-layout: fixed;
		border-collapse: collapse;
		background: #fff;
	}

	.c-no {
		width: 25px;
	}

	.c-a {
		width: 45px;
	}

	.c-b {
		width: 39px;
	}

	.c-c {
		width: 49px;
	}

	.c-d {
		width: 41px;
	}

	.c-e {
		width: 42px;
	}

	th,
	td {
		padding: 0 2px 0 1px;
		font-weight: 400;
		line-height: 8px;
		white-space: nowrap;
	}

	thead th {
		background: #f0f0f0;
	}

	.letters th {
		height: 8px;
		background: #dedede;
		border-right: 1px solid #9a9a9a;
		border-bottom: 1px solid #9a9a9a;
	}

	.corner,
	tbody th {
		background: #e0e0e0;
		border-right: 1px solid #8c8c8c;
	}

	td,
	tbody th {
		border-bottom: 1px solid #d4d4d4;
	}

	td {
		border-right: 1px solid #d4d4d4;
	}

	.letters .selected,
	tbody .selected {
		background: #0078d7;
		color: #fff;
	}

	.focused {
		outline: 1px dotted #777;
		outline-offset: -1px;
	}

	.center {
		text-align: center;
	}

	.num {
		text-align: right;
	}

	.sheet-tabs {
		display: flex;
		align-items: flex-start;
		padding: 5px 0 9px;
		font-family: 'Liberation Sans', Arial, sans-serif;
	}

	.sheet-tabs > button {
		padding: 0 1px;
		border-right: 1px solid #8c8c8c;
		border-bottom: 1px solid #b0b0b0;
		white-space: nowrap;
		line-height: 7px;
	}

	.sheet-tabs .active {
		background: #fff;
		border-bottom-color: #fff;
	}

	.pager {
		display: flex;
		margin-left: auto;
	}

	.pager button {
		width: 7px;
		box-sizing: border-box;
		border: 1px solid #c8c8c8;
	}

	/* Status bar */
	.statusbar {
		display: flex;
		align-items: center;
		height: 9px;
		padding: 0 2px;
		background: linear-gradient(#b4bfcd, #93a1b5);
		font-family: 'Liberation Sans', Arial, sans-serif;
	}

	.hint {
		flex: 1;
	}

	.statusbar button {
		margin-right: 1px;
		padding: 0 1px;
		border: 1px solid #6f7b8c;
		border-right-color: #c5ccd8;
		line-height: 6px;
		background: #a5afbd;
	}

	.statusbar .on {
		background: #c5ccd7;
		border-color: #c5ccd7;
	}

	.cell {
		width: 40px;
		padding-left: 1px;
		box-sizing: border-box;
		display: flex;
		gap: 4px;
		white-space: nowrap;
	}

	.cell.wide {
		width: 46px;
	}

	.cell.short {
		width: 33px;
	}
</style>
